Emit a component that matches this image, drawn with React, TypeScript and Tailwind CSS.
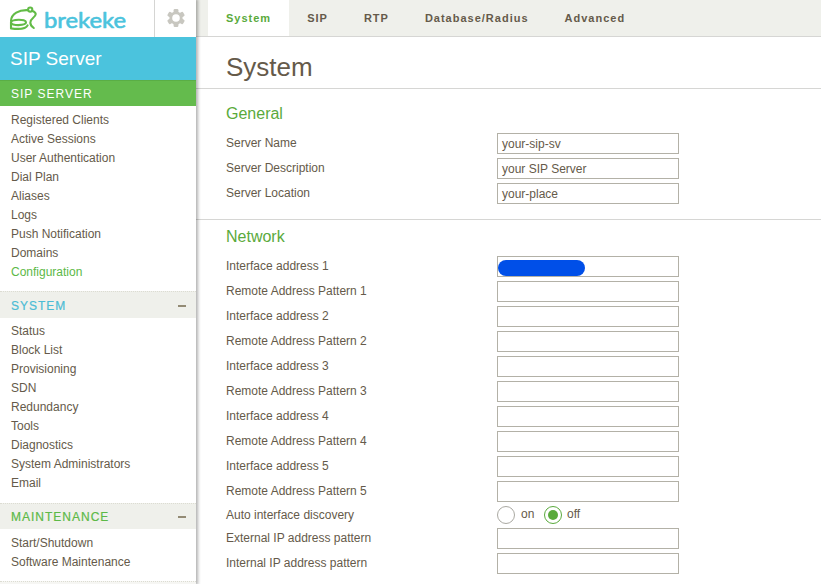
import React from "react";

const serverItems = [
  "Registered Clients",
  "Active Sessions",
  "User Authentication",
  "Dial Plan",
  "Aliases",
  "Logs",
  "Push Notification",
  "Domains",
  "Configuration",
];
const systemItems = [
  "Status",
  "Block List",
  "Provisioning",
  "SDN",
  "Redundancy",
  "Tools",
  "Diagnostics",
  "System Administrators",
  "Email",
];
const maintenanceItems = ["Start/Shutdown", "Software Maintenance"];
const tabs = ["System", "SIP", "RTP", "Database/Radius", "Advanced"];
const general = [
  ["Server Name", "your-sip-sv"],
  ["Server Description", "your SIP Server"],
  ["Server Location", "your-place"],
];
const interfaces = [1, 2, 3, 4, 5];

function Logo() {
  return (
    <svg className="block" width="154" height="37" viewBox="0 0 154 37" fill="none">
      <g stroke="#62bb46" strokeWidth="2.1" strokeLinecap="round" strokeLinejoin="round">
        <path d="M27.8 10.2C19 9.8 11.4 13.4 11 20.8" />
        <path d="M32.4 10.9C37.4 12.8 36 15.6 33 18C29.4 20.8 29.2 24.8 33.8 28" />
        <path d="M26 22.3C26 18.8 11.6 19 11 22.3C10.6 26 26 26 26 22.3" />
        <path d="M11 22.5V28.4C17.5 29.4 25.8 29.2 27.6 25.4" />
        <circle cx="30.2" cy="9.6" r="2.1" />
      </g>
      <text
        x="44"
        y="27.8"
        fill="#4bc3dd"
        stroke="#4bc3dd"
        strokeWidth="0.6"
        strokeLinejoin="round"
        textLength="82"
        lengthAdjust="spacingAndGlyphs"
        className="font-['Lato',sans-serif] text-[21px] font-normal"
      >
        brekeke
      </text>
    </svg>
  );
}

function Gear() {
  return (
    <svg width="20" height="20" viewBox="-10 -10 20 20" fill="#c8c7c0">
      {[0, 60, 120].map((angle) => (
        <rect key={angle} x="-2.4" y="-9" width="4.8" height="18" rx="1.2" transform={`rotate(${angle})`} />
      ))}
      <circle r="6.6" />
      <circle r="3.8" fill="#fff" />
    </svg>
  );
}

function Items({ items }: { items: string[] }) {
  return (
    <ul className="pl-[11px] text-xs leading-[19px]">
      {items.map((item) => (
        <li key={item} className={item === "Configuration" ? "text-[#5cb947]" : ""}>
          {item}
        </li>
      ))}
    </ul>
  );
}

function SectionBar({ title, color, height }: { title: string; color: string; height: string }) {
  return (
    <div
      className={`flex items-center justify-between border-t border-dotted border-[#dcdcd2] bg-[#eff0eb] pt-px pl-[11px] pr-[10px] text-xs tracking-[1px] ${color} ${height}`}
    >
      <span className="[-webkit-text-stroke:0.2px]">{title}</span>
      <span className="h-0.5 w-2 bg-[#938b75]" />
    </div>
  );
}

function Row({ label, value, redacted }: { label: string; value?: string; redacted?: boolean }) {
  return (
    <div className="flex h-[25px] items-start">
      <label className="w-[271px] leading-[20px]">{label}</label>
      <div className="flex h-[21px] w-[182px] items-center border border-[#b3b1a7] bg-white pl-1 pt-px">
        {value}
        {redacted && <span className="-ml-1 mt-[2px] h-4 w-[87px] rounded-full bg-[#004fe8]" />}
      </div>
    </div>
  );
}

export default function App() {
  return (
    <div className="flex h-[584px] w-[821px] overflow-hidden bg-white font-['Liberation_Sans',Arial,sans-serif] text-xs text-[#655a4a]">
      <aside className="z-10 flex w-[196px] shrink-0 flex-col bg-white shadow-[1px_0_3px_1px_rgba(0,0,0,0.3)]">
        <div className="flex h-[37px] shrink-0">
          <div className="w-[155px] border-r border-[#d5d5d3]">
            <Logo />
          </div>
          <div className="flex flex-1 items-center justify-center pl-px pb-px">
            <Gear />
          </div>
        </div>
        <div className="flex h-[43px] shrink-0 items-center bg-[#4bc3dd] pl-[10px] text-[19px] text-white">
          SIP Server
        </div>
        <div className="flex h-[26px] shrink-0 items-center border-t border-[#5aae45] bg-[#64bb4d] pl-[11px] text-xs tracking-[1px] text-white">
          SIP SERVER
        </div>
        <div className="pt-[5px] pb-[9px]">
          <Items items={serverItems} />
        </div>
        <SectionBar title="SYSTEM" color="text-[#4bbcd5]" height="h-[27px]" />
        <div className="pt-1 pb-[10px]">
          <Items items={systemItems} />
        </div>
        <SectionBar title="MAINTENANCE" color="text-[#5cb947]" height="h-[26px]" />
        <div className="pt-[5px] pb-[9px]">
          <Items items={maintenanceItems} />
        </div>
        <div className="h-[3px] border-t border-dotted border-[#dcdcd2] bg-[#f6f6f3]" />
      </aside>

      <main className="min-w-0 flex-1">
        <nav className="flex h-[37px] border-b border-[#d6d6d4] bg-[#eff0eb] pl-3 text-[11px] font-bold tracking-[1px]">
          {tabs.map((tab, i) => (
            <div
              key={tab}
              className={`flex items-center px-[18px] ${i === 0 ? "bg-white text-[#5aaa3c]" : ""}`}
            >
              {tab}
            </div>
          ))}
        </nav>
        <h1 className="flex h-[52px] items-center border-b border-[#d6d6d4] pl-[30px] pt-[10px] text-[26px]">System</h1>
        <section className="h-[131px] border-b border-[#d6d6d4] pl-[30px] pt-[15px]">
          <h2 className="mb-[9px] text-base leading-5 text-[#5aaa3c]">General</h2>
          {general.map(([label, value]) => (
            <Row key={label} label={label} value={value} />
          ))}
        </section>
        <section className="pl-[30px] pt-[7px]">
          <h2 className="mb-[9px] text-base leading-5 text-[#5aaa3c]">Network</h2>
          {interfaces.map((n) => (
            <React.Fragment key={n}>
              <Row label={`Interface address ${n}`} redacted={n === 1} />
              <Row label={`Remote Address Pattern ${n}`} />
            </React.Fragment>
          ))}
          <div className="flex h-[22px] items-start">
            <span className="w-[271px] leading-[18px]">Auto interface discovery</span>
            <span className="size-[18px] rounded-full border border-[#aaa9a2]" />
            <span className="ml-[6px] w-[23px] leading-4">on</span>
            <span className="flex size-[18px] items-center justify-center rounded-full border border-[#5aaa3c]">
              <span className="size-[10px] rounded-full bg-[#5aaa3c]" />
            </span>
            <span className="ml-[5px] leading-4">off</span>
          </div>
          <Row label="External IP address pattern" />
          <Row label="Internal IP address pattern" />
        </section>
      </main>
    </div>
  );
}
